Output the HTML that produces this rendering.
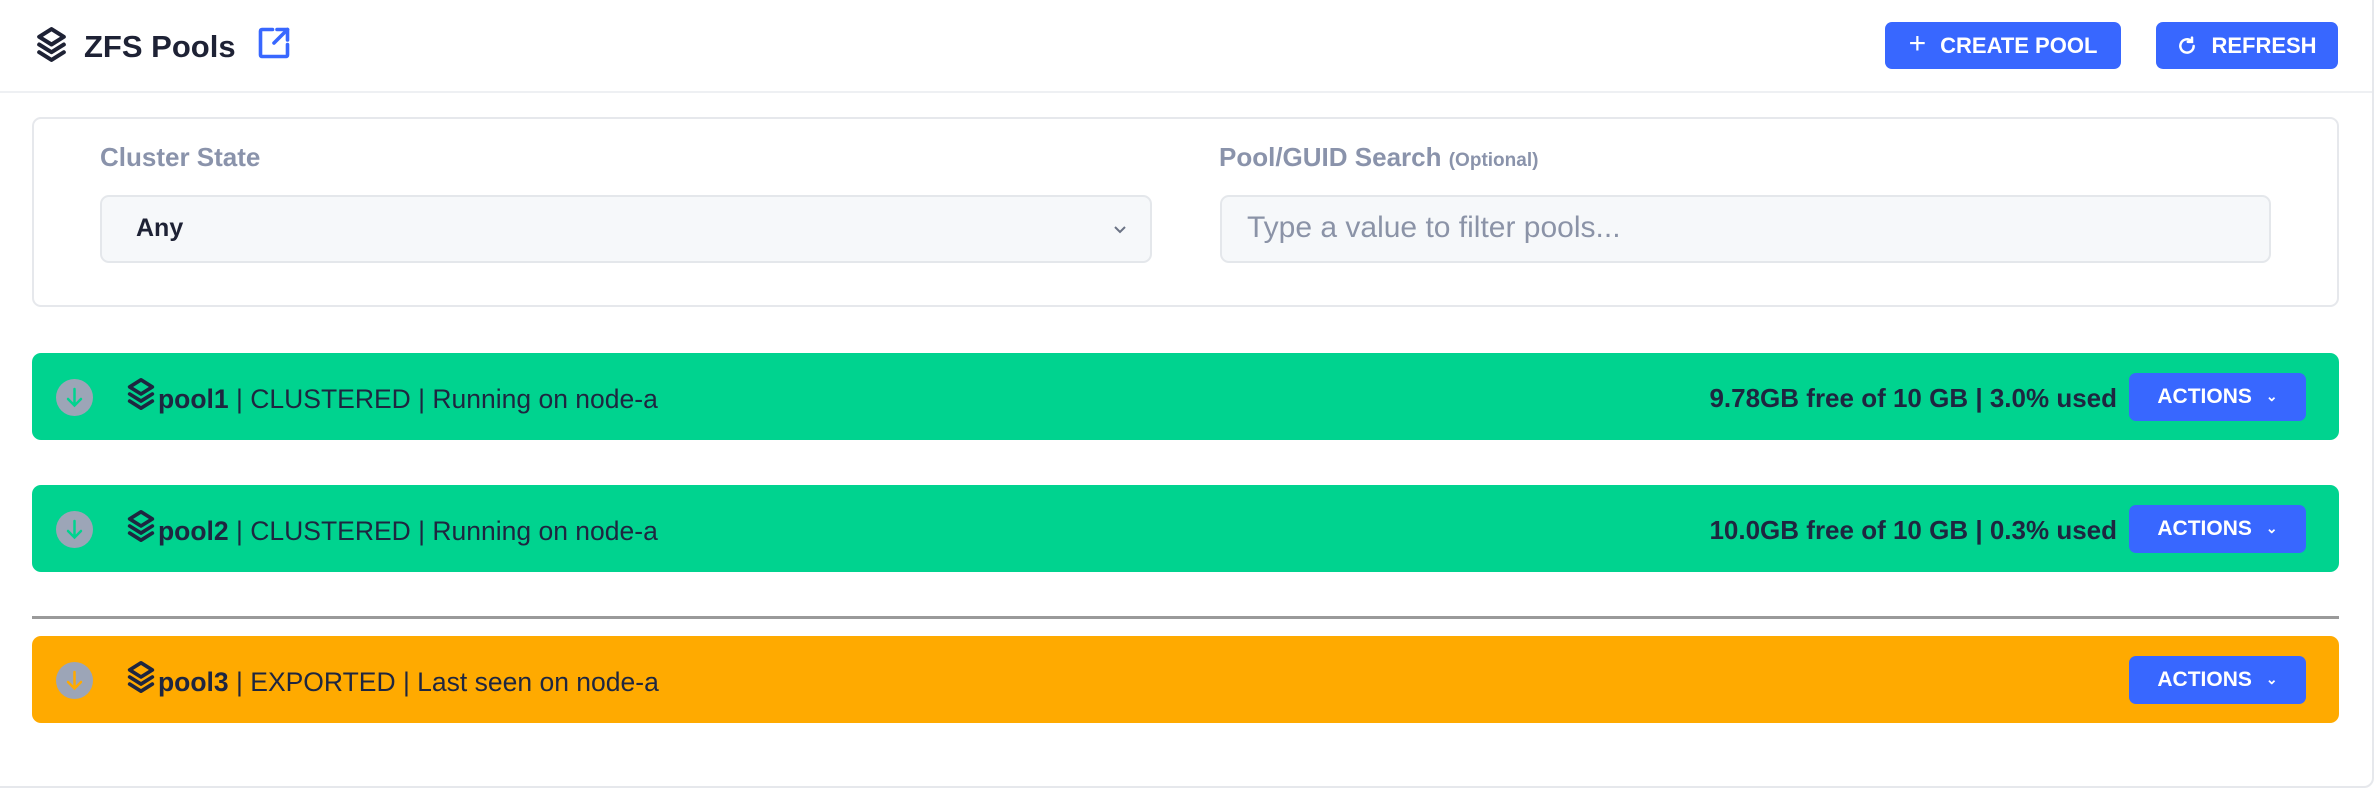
<!DOCTYPE html>
<html><head><meta charset="utf-8"><style>
*{box-sizing:border-box;margin:0;padding:0}
body{width:2376px;height:790px;background:#fff;font-family:"Liberation Sans",sans-serif;position:relative;overflow:hidden;color:#1e2235}
.abs{position:absolute}
.page{left:-10px;top:-10px;width:2384px;height:798px;border:2px solid #e6e8ec;border-radius:10px}
.hdr{left:0;top:91px;width:2372px;height:2px;background:#eef0f3}
.btn{background:#3867ff;color:#fff;border-radius:7px;font-weight:bold;font-size:22px;display:flex;align-items:center;justify-content:center;gap:14px}
.card{left:32px;top:117px;width:2307px;height:190px;border:2px solid #e6e8ec;border-radius:9px}
.lbl{font-weight:bold;font-size:26px;color:#8a93ab}
.field{background:#f6f8fa;border:2px solid #e4e7eb;border-radius:9px}
.bar{left:32px;width:2307px;border-radius:9px}
.circ{position:absolute;left:24px;width:37px;height:37px;border-radius:50%;background:#9ca5b7;top:50%;margin-top:-18px}
.txt{position:absolute;left:92px;top:3px;height:100%;display:flex;align-items:center;font-size:26.5px;color:#1e2640}
.stat{position:absolute;right:222px;top:0;height:100%;display:flex;align-items:center;padding-top:3px;font-weight:bold;font-size:26px;color:#1e2640}
.act{position:absolute;left:2097px;width:177px;height:48px;top:50%;margin-top:-24px;font-size:21px}
</style></head><body>
<div class="abs page"></div>
<svg class="abs" style="left:33px;top:26px" width="37" height="37" viewBox="0 0 24 24" fill="none" stroke="#1e2235" stroke-width="2.6" stroke-linejoin="round" stroke-linecap="round"><path d="M12 2L4 7l8 5 8-5z"/><path d="M4 12l8 5 8-5"/><path d="M4 17l8 5 8-5"/></svg>
<div class="abs" style="left:84px;top:29px;font-size:31px;font-weight:bold;color:#1e2235">ZFS Pools</div>
<svg class="abs" style="left:256px;top:25px" width="36" height="36" viewBox="0 0 24 24" fill="none" stroke="#3867ff" stroke-width="2.4" stroke-linecap="round" stroke-linejoin="round"><path d="M11 3H4a1 1 0 0 0-1 1v16a1 1 0 0 0 1 1h16a1 1 0 0 0 1-1v-7"/><path d="M14 3h7v7"/><path d="M21 3l-9 9"/></svg>
<div class="abs hdr"></div>
<div class="abs btn" style="left:1885px;top:22px;width:236px;height:47px"><span style="font-size:30px;font-weight:normal;margin-top:-3px">+</span>CREATE POOL</div>
<div class="abs btn" style="left:2156px;top:22px;width:182px;height:47px"><svg width="20" height="22" viewBox="0 0 24 24" fill="none" stroke="#fff" stroke-width="3" stroke-linecap="round"><path d="M20 12a8 8 0 1 1-3-6.3"/><path d="M18 2v5h-5"/></svg>REFRESH</div>

<div class="abs card"></div>
<div class="abs lbl" style="left:100px;top:142px">Cluster State</div>
<div class="abs field" style="left:100px;top:195px;width:1052px;height:68px"></div>
<div class="abs" style="left:136px;top:214px;font-size:25px;font-weight:bold;color:#1e2235">Any</div>
<svg class="abs" style="left:1112px;top:222px" width="16" height="14" viewBox="0 0 16 14" fill="none" stroke="#6b7385" stroke-width="2"><path d="M3 5l5 5 5-5"/></svg>
<div class="abs lbl" style="left:1219px;top:142px">Pool/GUID Search <span style="font-size:19px">(Optional)</span></div>
<div class="abs field" style="left:1220px;top:195px;width:1051px;height:68px"></div>
<div class="abs" style="left:1247px;top:211px;font-size:30px;color:#8b93a7">Type a value to filter pools...</div>

<div class="abs bar" style="top:353px;height:87px;background:#00d38f">
<div class="circ"><svg width="37" height="37" viewBox="0 0 37 37" fill="none" stroke="#00d38f" stroke-width="2.5" stroke-linecap="round"><path d="M18.5 10v16M12 20l6.5 6.5L25 20"/></svg></div>
<div class="txt"><svg width="34" height="36" viewBox="0 0 24 24" fill="none" stroke="#1e2640" stroke-width="2.6" stroke-linejoin="round" stroke-linecap="round" style="margin-top:-12px"><path d="M12 2L4 7l8 5 8-5z"/><path d="M4 12l8 5 8-5"/><path d="M4 17l8 5 8-5"/></svg><b>pool1</b>&nbsp;| CLUSTERED | Running on node-a</div>
<div class="stat">9.78GB free of 10 GB | 3.0% used</div>
<div class="abs btn act">ACTIONS <span style="font-size:14px">&#8964;</span></div>
</div>

<div class="abs bar" style="top:485px;height:87px;background:#00d38f">
<div class="circ"><svg width="37" height="37" viewBox="0 0 37 37" fill="none" stroke="#00d38f" stroke-width="2.5" stroke-linecap="round"><path d="M18.5 10v16M12 20l6.5 6.5L25 20"/></svg></div>
<div class="txt"><svg width="34" height="36" viewBox="0 0 24 24" fill="none" stroke="#1e2640" stroke-width="2.6" stroke-linejoin="round" stroke-linecap="round" style="margin-top:-12px"><path d="M12 2L4 7l8 5 8-5z"/><path d="M4 12l8 5 8-5"/><path d="M4 17l8 5 8-5"/></svg><b>pool2</b>&nbsp;| CLUSTERED | Running on node-a</div>
<div class="stat">10.0GB free of 10 GB | 0.3% used</div>
<div class="abs btn act">ACTIONS <span style="font-size:14px">&#8964;</span></div>
</div>

<div class="abs" style="left:32px;top:616px;width:2307px;height:3px;background:#9a9a9a"></div>

<div class="abs bar" style="top:636px;height:87px;background:#ffaa00">
<div class="circ"><svg width="37" height="37" viewBox="0 0 37 37" fill="none" stroke="#ffaa00" stroke-width="2.5" stroke-linecap="round"><path d="M18.5 10v16M12 20l6.5 6.5L25 20"/></svg></div>
<div class="txt"><svg width="34" height="36" viewBox="0 0 24 24" fill="none" stroke="#1e2640" stroke-width="2.6" stroke-linejoin="round" stroke-linecap="round" style="margin-top:-12px"><path d="M12 2L4 7l8 5 8-5z"/><path d="M4 12l8 5 8-5"/><path d="M4 17l8 5 8-5"/></svg><b>pool3</b>&nbsp;| EXPORTED | Last seen on node-a</div>
<div class="abs btn act">ACTIONS <span style="font-size:14px">&#8964;</span></div>
</div>
</body></html>
